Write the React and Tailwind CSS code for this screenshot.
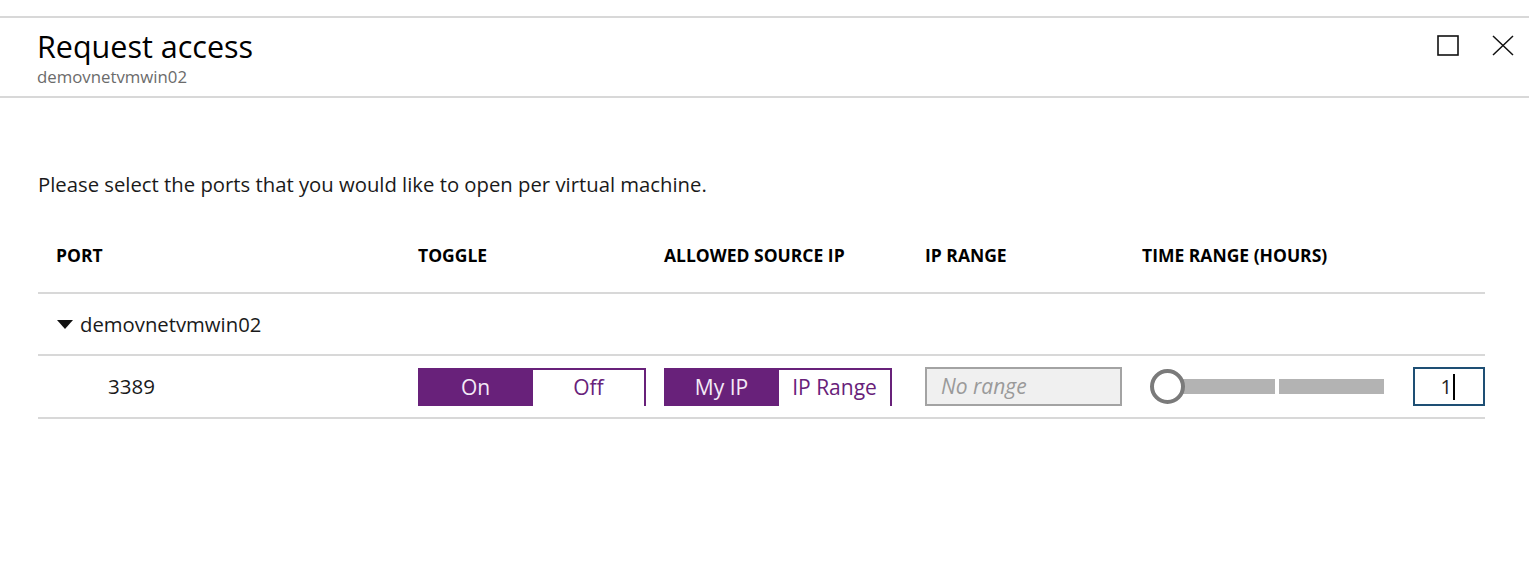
import React from 'react'

const font = { fontFamily: '"Open Sans", "Noto Sans", sans-serif' }

function Segmented({ left, right }) {
  return (
    <div className="flex h-[38px] w-[228px]">
      <div className="flex w-[115px] items-center justify-center bg-[#68217a] pt-[2px] text-[21px] text-[#f4eaf7]">{left}</div>
      <div className="flex flex-1 items-center justify-center border-t-2 border-r-2 border-[#68217a] text-[21px] text-[#68217a]">{right}</div>
    </div>
  )
}

export default function App() {
  return (
    <div className="min-h-[573px] w-[1529px] bg-white text-[#222]" style={font}>
      <div className="h-[16px]" />
      {/* Header */}
      <div className="flex h-[82px] items-start justify-between border-t-2 border-b-2 border-[#d8d8d8]">
        <div className="pl-[37px] pt-[9px]">
          <h1 className="text-[30.5px] leading-[38px] text-black">Request access</h1>
          <p className="text-[16.8px] leading-[24px] text-[#6b6b6b]">demovnetvmwin02</p>
        </div>
        <div className="flex items-center gap-[33px] pr-[15px] pt-[17px]">
          <svg width="22" height="21" viewBox="0 0 22 21">
            <rect x="1" y="1" width="20" height="19" fill="none" stroke="#111" strokeWidth="1.6" />
          </svg>
          <svg width="22" height="21" viewBox="0 0 22 21">
            <path d="M1 1 L21 20 M21 1 L1 20" stroke="#111" strokeWidth="1.5" fill="none" />
          </svg>
        </div>
      </div>

      <div className="px-[38px] pt-[72px]">
        <p className="text-[20.3px] leading-[28px] text-[#1a1a1a]">Please select the ports that you would like to open per virtual machine.</p>

        <div className="mt-[34px] w-[1447px]">
          {/* Column headers */}
          <div className="grid h-[62px] grid-cols-[380px_246px_261px_217px_1fr] items-center border-b-2 border-[#d8d8d8] pb-[14px] text-[17.5px] font-bold text-black">
            <div className="pl-[18px]">PORT</div>
            <div>TOGGLE</div>
            <div>ALLOWED SOURCE IP</div>
            <div>IP RANGE</div>
            <div>TIME RANGE (HOURS)</div>
          </div>

          {/* Group row */}
          <div className="flex h-[62px] items-center border-b-2 border-[#d8d8d8] pl-[19px]">
            <svg width="16" height="9" viewBox="0 0 16 9" className="mr-[7px]">
              <path d="M0 0 H16 L8 9 Z" fill="#111" />
            </svg>
            <span className="text-[20.3px] text-[#1a1a1a]">demovnetvmwin02</span>
          </div>

          {/* Port row */}
          <div className="grid h-[63px] grid-cols-[380px_246px_261px_217px_1fr] items-center border-b-2 border-[#d8d8d8]">
            <div className="pl-[70px] text-[20.5px] text-[#1a1a1a]">3389</div>
            <Segmented left="On" right="Off" />
            <Segmented left="My IP" right="IP Range" />
            <div className="flex h-[39px] w-[197px] items-center border-2 border-[#a3a3a3] bg-[#f0f0f0] pl-[14px] text-[21px] italic text-[#9a9a9a]">
              No range
            </div>
            <div className="flex items-center pl-[8px]">
              <div className="relative flex items-center">
                <div className="z-10 h-[35px] w-[35px] rounded-full border-4 border-[#7a7a7a] bg-white" />
                <div className="ml-[-2px] h-[15px] w-[92px] bg-[#b3b3b3]" />
                <div className="ml-[4px] h-[15px] w-[105px] bg-[#b3b3b3]" />
              </div>
              <div className="ml-auto flex h-[39px] w-[72px] items-center justify-end border-2 border-[#1e4f74] pr-[28px] text-[20px] text-[#222]">
                1<span className="ml-[1px] inline-block h-[26px] w-[2px] bg-black" />
              </div>
            </div>
          </div>
        </div>
      </div>
    </div>
  )
}
